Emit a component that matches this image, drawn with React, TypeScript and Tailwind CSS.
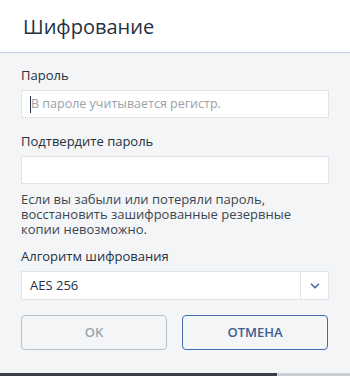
import { ChevronDown } from "lucide-react";

export default function App() {
  return (
    <div
      className="w-[350px] h-[376px] flex flex-col bg-[#f4f5f7] text-[#243143] overflow-hidden"
      style={{ fontFamily: '"Open Sans", "Noto Sans", sans-serif' }}
    >
      <div className="h-[53px] shrink-0 bg-white border-b border-[#c3cde0] px-[23px] flex items-center">
        <h1 className="text-[20px] leading-none font-normal pt-[1px]">Шифрование</h1>
      </div>

      <div className="flex-1 px-[21px] pt-[13px] flex flex-col">
        <label className="text-[13px] leading-[18px]">Пароль</label>
        <div className="mt-[6px] h-[28px] bg-white border border-[#e1e4e8] flex items-center pl-[8px]">
          <span className="w-px h-[17px] bg-[#243143]" />
          <span className="text-[12.5px] text-[#9aa2ac]">В пароле учитывается регистр.</span>
        </div>

        <label className="mt-[14px] text-[13px] leading-[18px]">Подтвердите пароль</label>
        <div className="mt-[6px] h-[28px] bg-white border border-[#e1e4e8]" />

        <p className="mt-[8px] text-[13px] leading-[15px] text-[#3c4652]">
          Если вы забыли или потеряли пароль,
          <br />
          восстановить зашифрованные резервные
          <br />
          копии невозможно.
        </p>

        <label className="mt-[10px] text-[13px] leading-[18px]">Алгоритм шифрования</label>
        <div className="mt-[6px] h-[29px] bg-white border border-[#e1e4e8] flex items-stretch">
          <span className="flex-1 flex items-center pl-[8px] text-[13px]">AES 256</span>
          <span className="w-[28px] border-l border-[#e1e4e8] flex items-center justify-center text-[#4a6fa8]">
            <ChevronDown size={14} strokeWidth={3} />
          </span>
        </div>

        <div className="mt-[15px] flex gap-[15px]">
          <button className="w-[146px] h-[35px] rounded-[4px] border border-[#b8c1cb] text-[#9ba4ae] text-[13px] font-semibold">
            OK
          </button>
          <button className="w-[146px] h-[35px] rounded-[4px] border border-[#3f6cb0] text-[#3c5f92] text-[13px] font-semibold">
            ОТМЕНА
          </button>
        </div>
      </div>

      <div className="h-[3px] shrink-0 flex">
        <div className="w-[277px] bg-[#3a3f47]" />
        <div className="flex-1 bg-[#c9ccd1]" />
      </div>
    </div>
  );
}
